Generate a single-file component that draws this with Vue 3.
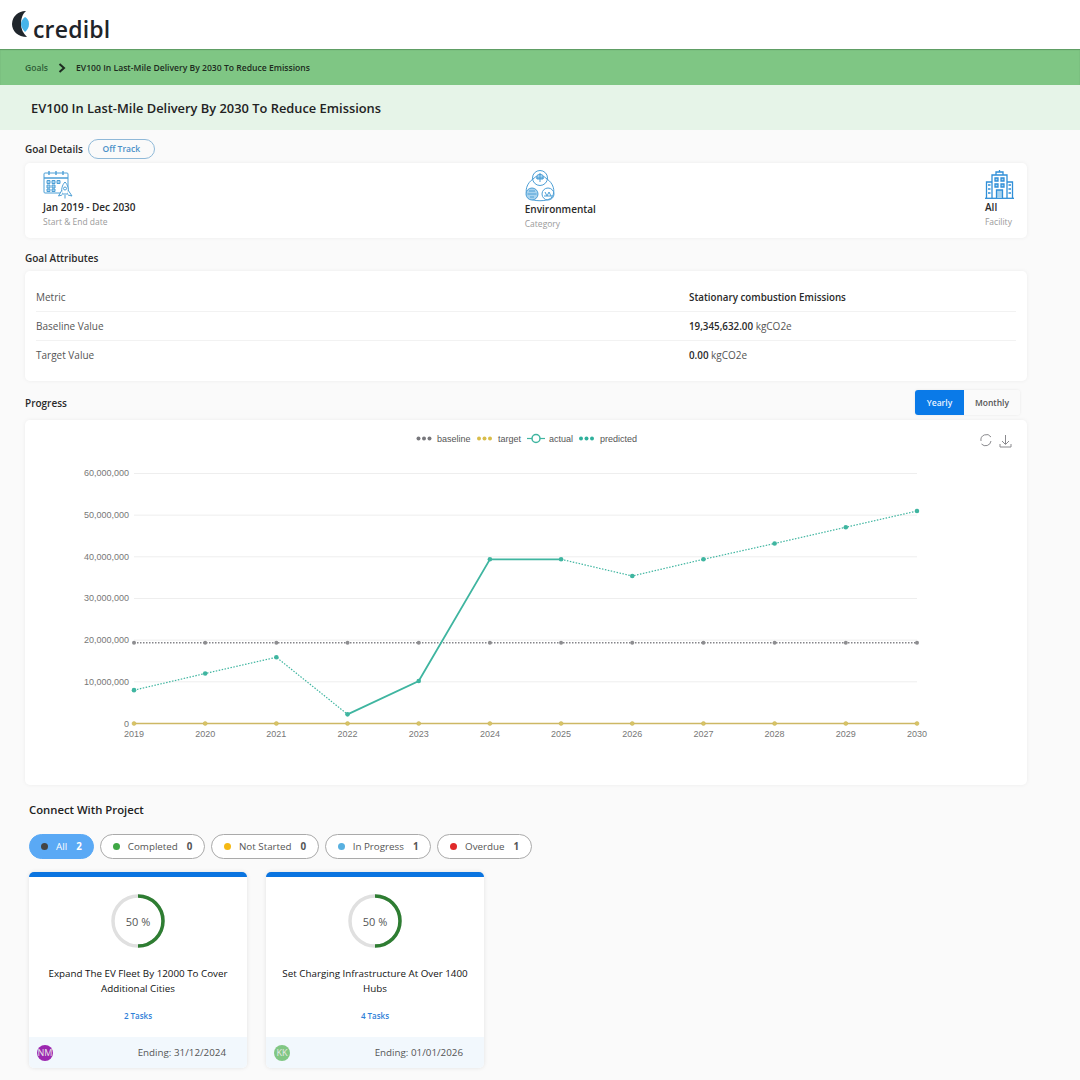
<script setup>
import { computed } from 'vue';

const details = [
  { id: 'date', value: 'Jan 2019 - Dec 2030', label: 'Start & End date' },
  { id: 'category', value: 'Environmental', label: 'Category' },
  { id: 'facility', value: 'All', label: 'Facility' }
];

const attributes = [
  { label: 'Metric', value: 'Stationary combustion Emissions', unit: '' },
  { label: 'Baseline Value', value: '19,345,632.00', unit: 'kgCO2e' },
  { label: 'Target Value', value: '0.00', unit: 'kgCO2e' }
];

const filters = [
  { label: 'All', count: 2, color: '#444', active: true },
  { label: 'Completed', count: 0, color: '#3fa845' },
  { label: 'Not Started', count: 0, color: '#f5b914' },
  { label: 'In Progress', count: 1, color: '#58b0e0' },
  { label: 'Overdue', count: 1, color: '#e02a2a' }
];

const projects = [
  { title: 'Expand The EV Fleet By 12000 To Cover Additional Cities', tasks: '2 Tasks', initials: 'NM', color: '#9c27b0', ending: '31/12/2024' },
  { title: 'Set Charging Infrastructure At Over 1400 Hubs', tasks: '4 Tasks', initials: 'KK', color: '#81c784', ending: '01/01/2026' }
];

// Chart scale, in page pixels because the viewBox starts at the card corner
const years = [2019, 2020, 2021, 2022, 2023, 2024, 2025, 2026, 2027, 2028, 2029, 2030];
const xAt = (i) => 134 + i * 71.18;
const yAt = (v) => 723.5 - v * 4.167;

const yTicks = [0, 10, 20, 30, 40, 50, 60].map((v) => ({
  y: yAt(v),
  label: v === 0 ? '0' : `${v},000,000`
}));

const baseline = 19.35;
const series = [8, 12, 15.9, 2.2, 10.2, 39.4, 39.4, 35.4, 39.4, 43.2, 47.1, 51];
const toPoints = (from, to) =>
  series.slice(from, to + 1).map((v, i) => `${xAt(from + i)},${yAt(v)}`).join(' ');

const predictedA = computed(() => toPoints(0, 3));
const actual = computed(() => toPoints(3, 6));
const predictedB = computed(() => toPoints(6, 11));
const dots = computed(() => series.map((v, i) => ({ x: xAt(i), y: yAt(v) })));
</script>

<template>
  <div class="page">
    <header class="topbar">
      <svg class="logo-mark" viewBox="11 10 20 28" width="20" height="28">
        <path d="M26 11 A13.500 13.500 0 0 0 12 24 C12 31 18 37 27 37 C23 33 21 29 21 24 C21 19 22.500 14 26 11 Z" fill="#20262c" />
        <path d="M25 17 C27 18 29 20 29 24 C29 28 27 30 25 32 C22.500 29 21 27 21 24 C21 21 22.500 19 25 17 Z" fill="#45b4ea" />
      </svg>
      <span class="logo-text">credibl</span>
    </header>

    <nav class="crumbs">
      <span class="crumb-root">Goals</span>
      <svg viewBox="0 0 8 10" width="8" height="10"><path d="M1.5 1 L6 5 L1.5 9" fill="none" stroke="#1d2b20" stroke-width="2" /></svg>
      <span class="crumb-current">EV100 In Last-Mile Delivery By 2030 To Reduce Emissions</span>
    </nav>

    <div class="title-band">
      <h1>EV100 In Last-Mile Delivery By 2030 To Reduce Emissions</h1>
    </div>

    <main class="content">
      <div class="section-head details-head">
        <h2>Goal Details</h2>
        <span class="status-pill">Off Track</span>
      </div>
      <section class="card details">
        <div v-for="d in details" :key="d.id" class="detail" :class="d.id">
          <svg v-if="d.id === 'date'" class="icon" viewBox="0 0 30 29" width="30" height="29" fill="none" stroke="#4d9fd6" stroke-width="1">
            <rect x="1" y="3" width="24" height="20" rx="1" />
            <path d="M1 8 H25 M6 1 V5 M13 1 V5 M20 1 V5" stroke-width="1.400" />
            <path d="M4 10.500 h3 v3 h-3 z M9 10.500 h3 v3 h-3 z M14 10.500 h3 v3 h-3 z M4 15 h3 v3 h-3 z M9 15 h3 v3 h-3 z M4 19 h3 v2.500 h-3 z M9 19 h3 v2.500 h-3 z" fill="#a9d3ee" />
            <path d="M22 12 C25 15 26 20 25 24 L19 24 C18 20 19 15 22 12 Z" fill="#fff" />
            <circle cx="22" cy="18.500" r="1.500" />
            <path d="M19 20 L15.500 26 L19 25 M25 20 L29 26 L25 25 M22 25 V28.500" fill="#fff" />
          </svg>
          <svg v-else-if="d.id === 'category'" class="icon" viewBox="0 0 30 34" width="30" height="34" fill="none" stroke="#4d9fd6" stroke-width="1">
            <path d="M8 11 A9 9 0 0 1 22 11 C28 15 31 23 27 29 C24 34 6 34 3 29 C-1 23 2 15 8 11 Z" />
            <circle cx="15" cy="10" r="7.500" />
            <path d="M15 5 V14 M11 10 H19 M12 7.500 C13 6 17 6 18 7.500 L18 11 L12 11 Z" fill="#a9d3ee" />
            <circle cx="7" cy="26" r="6" fill="#a9d3ee" />
            <path d="M2.500 26 H11.500 M4 23 H10 M5 29 H9" />
            <circle cx="23" cy="26" r="6" />
            <path d="M20 24 l2 4 l2 -4 l2 4 M19 28 H27" />
          </svg>
          <svg v-else class="icon" viewBox="0 0 29 29" width="29" height="29" fill="none" stroke="#2f8fd8" stroke-width="1.300">
            <path d="M0 28.300 H29" />
            <path d="M7 28 V5 H22 V28 M1.500 28 V12 H7 M22 12 H27.500 V28 M11 5 V2 H18 V5 M14.500 2 V0" />
            <path d="M10 8 h3 v3 h-3 z M16 8 h3 v3 h-3 z M10 14 h3 v3 h-3 z M16 14 h3 v3 h-3 z M11.500 28 V20 H17.500 V28" fill="#a9d3ee" />
            <path d="M3 15 H5.500 M3 19 H5.500 M3 23 H5.500 M23.500 15 H26 M23.500 19 H26 M23.500 23 H26" />
          </svg>
          <strong>{{ d.value }}</strong>
          <small>{{ d.label }}</small>
        </div>
      </section>

      <div class="section-head">
        <h2>Goal Attributes</h2>
      </div>
      <section class="card attributes">
        <div v-for="a in attributes" :key="a.label" class="attr-row">
          <span class="attr-label">{{ a.label }}</span>
          <span class="attr-value"><b>{{ a.value }}</b> {{ a.unit }}</span>
        </div>
      </section>

      <div class="section-head progress-head">
        <h2>Progress</h2>
        <div class="tabs">
          <button class="tab active">Yearly</button>
          <button class="tab">Monthly</button>
        </div>
      </div>
      <section class="card chart-card">
        <svg class="chart" viewBox="25 420 1002 365" width="1002" height="365">
          <g class="legend">
            <g fill="#77777c"><circle cx="418.500" cy="438.500" r="2" /><circle cx="424" cy="438.500" r="2" /><circle cx="429.500" cy="438.500" r="2" /></g>
            <text x="437" y="442">baseline</text>
            <g fill="#d9bd4a"><circle cx="479" cy="438.500" r="2" /><circle cx="484.500" cy="438.500" r="2" /><circle cx="490" cy="438.500" r="2" /></g>
            <text x="498" y="442">target</text>
            <path d="M527 438.500 H545" stroke="#3fb5a0" stroke-width="1.200" />
            <circle cx="536" cy="438.500" r="4" fill="#fff" stroke="#3fb5a0" stroke-width="1.500" />
            <text x="549" y="442">actual</text>
            <g fill="#2fb09c"><circle cx="581" cy="438.500" r="2" /><circle cx="586.500" cy="438.500" r="2" /><circle cx="592" cy="438.500" r="2" /></g>
            <text x="600" y="442">predicted</text>
          </g>

          <g fill="none" stroke="#8a8a8e" stroke-width="1">
            <path d="M991 437 A5.500 5.500 0 0 0 981 441" />
            <path d="M981.500 444 A5.500 5.500 0 0 0 991 441" />
            <path d="M1005.500 435 V444 M1002 441 L1005.500 444.500 L1009 441 M1000 444 V447 H1011 V444" />
          </g>

          <g v-for="t in yTicks" :key="t.y">
            <line x1="134" x2="917" :y1="t.y" :y2="t.y" stroke="#eeeeee" stroke-width="1" />
            <text class="axis" x="129" :y="t.y + 3" text-anchor="end">{{ t.label }}</text>
          </g>
          <text v-for="(yr, i) in years" :key="yr" class="axis" :x="xAt(i)" y="736.500" text-anchor="middle">{{ yr }}</text>

          <line x1="134" x2="917" :y1="yAt(baseline)" :y2="yAt(baseline)" stroke="#85858a" stroke-width="1.500" stroke-dasharray="1.500 1.500" />
          <circle v-for="(yr, i) in years" :key="'b' + yr" :cx="xAt(i)" :cy="yAt(baseline)" r="2" fill="#8d8d90" />

          <line x1="134" x2="917" :y1="yAt(0)" :y2="yAt(0)" stroke="#cdb864" stroke-width="1.500" />
          <circle v-for="(yr, i) in years" :key="'t' + yr" :cx="xAt(i)" :cy="yAt(0)" r="2" fill="#d8c465" stroke="#c9b25a" stroke-width="0.500" />

          <polyline :points="predictedA" class="line dotted" />
          <polyline :points="actual" class="line solid" />
          <polyline :points="predictedB" class="line dotted" />
          <circle v-for="p in dots" :key="p.x" :cx="p.x" :cy="p.y" r="2.300" fill="#3fb5a0" />
        </svg>
      </section>

      <section class="projects">
        <h2 class="projects-title">Connect With Project</h2>
        <div class="filters">
          <span v-for="f in filters" :key="f.label" class="chip" :class="{ active: f.active }">
            <i class="dot" :style="{ background: f.color }"></i>
            <span class="chip-label">{{ f.label }}</span>
            <b>{{ f.count }}</b>
          </span>
        </div>
        <div class="project-list">
          <article v-for="p in projects" :key="p.title" class="project">
            <div class="project-body">
              <div class="ring">
                <svg viewBox="0 0 54 54" width="54" height="54">
                  <circle cx="27" cy="27" r="25" fill="none" stroke="#e0e0e0" stroke-width="3.500" />
                  <path d="M27 2 A25 25 0 0 1 27 52" fill="none" stroke="#2e7d32" stroke-width="3.500" />
                </svg>
                <span>50 %</span>
              </div>
              <h3>{{ p.title }}</h3>
              <a class="tasks">{{ p.tasks }}</a>
            </div>
            <footer class="project-foot">
              <span class="avatar" :style="{ background: p.color }">{{ p.initials }}</span>
              <span class="ending">Ending: {{ p.ending }}</span>
            </footer>
          </article>
        </div>
      </section>
    </main>
  </div>
</template>

<style>
html, body {
  margin: 0;
  background: #fafafa;
}
</style>

<style scoped>
.page {
  width: 1080px;
  height: 1080px;
  overflow: hidden;
  background: #fafafa;
  font-family: "Open Sans", "Liberation Sans", sans-serif;
  color: #222;
}

.topbar {
  height: 49px;
  background: #fff;
  display: flex;
  align-items: flex-start;
  padding: 10px 0 0 11px;
  box-sizing: border-box;
}

.logo-mark {
  flex: none;
}

.logo-text {
  font-family: "Open Sans", sans-serif;
  font-size: 23px;
  font-weight: 600;
  line-height: 28px;
  color: #1f2429;
  margin: 5px 0 0 2px;
  letter-spacing: 0.2px;
}

.crumbs {
  height: 36px;
  background: #7fc684;
  box-shadow: inset 0 1px 1px rgba(60, 110, 65, 0.5);
  display: flex;
  align-items: center;
  padding: 1px 0 0 25px;
  box-sizing: border-box;
  font-size: 8.6px;
  font-weight: 600;
}

.crumb-root {
  color: #2f5f38;
  margin-right: 10px;
}

.crumb-current {
  color: #1d2b20;
  margin-left: 10px;
}

.title-band {
  height: 45px;
  box-sizing: border-box;
  padding: 1px 0 0 31px;
  background: #e6f4e8;
  display: flex;
  align-items: center;
}

h1 {
  margin: 0;
  font-size: 12.86px;
  font-weight: 600;
  color: #222;
}

.content {
  padding: 0 53px 0 25px;
}

.section-head {
  display: flex;
  align-items: center;
  height: 20px;
}

.details-head {
  margin-top: 9px;
  margin-bottom: 4px;
}

h2 {
  margin: 0;
  font-size: 10px;
  font-weight: 600;
  color: #2a2a2a;
}

.status-pill {
  margin-left: 5px;
  width: 67px;
  height: 20px;
  box-sizing: border-box;
  padding-bottom: 1px;
  border: 1px solid #8fb9d8;
  border-radius: 10px;
  color: #4a90c8;
  font-size: 8.500px;
  font-weight: 600;
  display: flex;
  align-items: center;
  justify-content: center;
}

.card {
  background: #fff;
  border-radius: 5px;
  box-shadow: 0 0 4px rgba(0, 0, 0, 0.06);
}

.details {
  height: 75px;
  box-sizing: border-box;
  padding: 6px 13px 0 18px;
  display: flex;
  justify-content: space-between;
}

.detail {
  display: flex;
  flex-direction: column;
  align-items: flex-start;
}

.detail.date .icon,
.detail.facility .icon {
  margin-top: 1px;
  margin-bottom: 1px;
}

.detail.category .icon {
  margin-top: -1px;
}

.detail strong {
  font-size: 10px;
  line-height: 15px;
  font-weight: 600;
  color: #2a2a2a;
}

.detail small {
  font-size: 8.500px;
  line-height: 13px;
  color: #9a9a9a;
}

.details + .section-head {
  margin-top: 10px;
}

.attributes {
  margin-top: 3px;
  height: 110px;
  box-sizing: border-box;
  padding: 12px 11px 0;
}

.attr-row {
  height: 29px;
  box-sizing: border-box;
  display: flex;
  align-items: center;
  border-bottom: 1px solid #f2f2f2;
  font-size: 10px;
  color: #555;
}

.attr-row:last-child {
  border-bottom: none;
  padding-bottom: 1px;
}

.attr-label {
  width: 653px;
}

.attr-value b {
  font-size: 9.800px;
  font-weight: 600;
  color: #2a2a2a;
}

.progress-head {
  justify-content: space-between;
  margin-top: 9px;
  height: 25px;
}

.tabs {
  display: flex;
  margin-right: 7px;
  box-shadow: 0 0 3px rgba(0, 0, 0, 0.08);
  border-radius: 3px;
}

.tab {
  height: 25px;
  border: none;
  padding: 0;
  width: 56px;
  background: #fafafa;
  color: #555;
  font-family: inherit;
  font-size: 8.500px;
  font-weight: 600;
  border-radius: 0 3px 3px 0;
}

.tab.active {
  width: 49px;
  background: #0a7ae8;
  color: #e8f3ff;
  border-radius: 3px 0 0 3px;
}

.chart-card {
  margin-top: 5px;
  height: 365px;
}

.chart {
  display: block;
}

.legend text {
  font-family: "Liberation Sans", Arial, sans-serif;
  font-size: 9px;
  fill: #555;
}

.axis {
  font-family: "Liberation Sans", Arial, sans-serif;
  font-size: 9px;
  fill: #777;
}

.line {
  fill: none;
  stroke: #3fb5a0;
}

.line.solid {
  stroke-width: 1.800;
}

.line.dotted {
  stroke-width: 1.200;
  stroke-dasharray: 1.500 1.500;
}

.projects {
  padding-left: 4px;
}

.projects-title {
  margin-top: 17px;
  font-size: 11.300px;
  line-height: 16px;
  color: #222;
}

.filters {
  display: flex;
  gap: 6px;
  margin-top: 16px;
}

.chip {
  height: 25px;
  box-sizing: border-box;
  border: 1px solid #aaa;
  border-radius: 13px;
  display: flex;
  align-items: center;
  padding: 0 11.500px 0 12px;
  font-size: 9.800px;
  color: #555;
  background: #fff;
}

.chip.active {
  background: #5aa9f5;
  border-color: #5aa9f5;
  color: #fff;
  padding: 0 11px;
}

.dot {
  width: 7px;
  height: 7px;
  border-radius: 50%;
  margin-right: 8px;
}

.chip b {
  margin-left: 9px;
  font-weight: 700;
}

.project-list {
  display: flex;
  gap: 19px;
  margin-top: 13px;
}

.project {
  width: 218px;
  height: 196px;
  box-sizing: border-box;
  background: #fff;
  border-top: 5px solid #0a74e0;
  border-radius: 5px;
  box-shadow: 0 0 4px rgba(0, 0, 0, 0.1);
  display: flex;
  flex-direction: column;
  overflow: hidden;
}

.project-body {
  flex: 1;
  display: flex;
  flex-direction: column;
  align-items: center;
  padding-top: 17px;
}

.ring {
  position: relative;
  width: 54px;
  height: 54px;
}

.ring svg {
  display: block;
}

.ring span {
  position: absolute;
  inset: 0;
  display: flex;
  align-items: center;
  justify-content: center;
  font-size: 11px;
  color: #555;
}

h3 {
  margin: 18px 0 0;
  width: 196px;
  font-size: 9.800px;
  line-height: 15px;
  font-weight: 500;
  text-align: center;
  color: #111;
}

.tasks {
  margin-top: 14px;
  font-size: 8px;
  font-weight: 600;
  color: #2f80d8;
}

.project-foot {
  height: 31px;
  background: #f2f8fd;
  display: flex;
  align-items: center;
  justify-content: space-between;
  padding: 0 21px 0 8px;
}

.avatar {
  width: 16px;
  height: 16px;
  border-radius: 50%;
  color: #e8e8e8;
  font-size: 9px;
  display: flex;
  align-items: center;
  justify-content: center;
}

.ending {
  font-size: 9.800px;
  color: #555;
}
</style>
